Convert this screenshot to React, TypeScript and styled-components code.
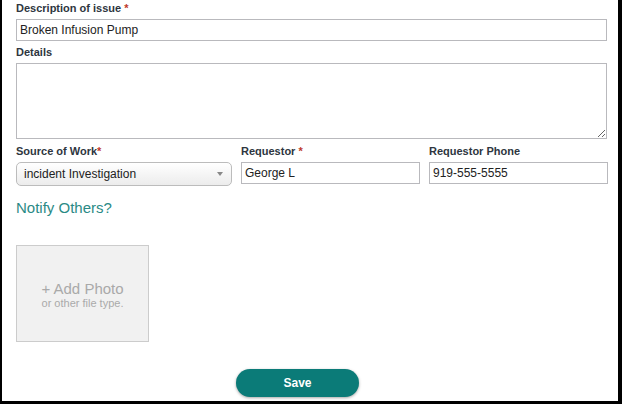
import React from 'react';
import styled, { createGlobalStyle } from 'styled-components';

const GlobalStyle = createGlobalStyle`
  html, body {
    margin: 0;
    padding: 0;
    background: #fff;
  }
  body {
    font-family: Arial, "Liberation Sans", sans-serif;
  }
`;

export default function App() {
  return (
    <>
      <GlobalStyle />
      <Frame>
        <Field>
          <Label>Description of issue <Req>*</Req></Label>
          <TextInput defaultValue="Broken Infusion Pump" />
        </Field>
        <Field>
          <Label>Details</Label>
          <TextArea />
        </Field>
        <Row>
          <Field>
            <Label>Source of Work<Req>*</Req></Label>
            <SelectBox>
              <span>incident Investigation</span>
              <Caret />
            </SelectBox>
          </Field>
          <Field>
            <Label>Requestor <Req>*</Req></Label>
            <TextInput defaultValue="George L" />
          </Field>
          <Field>
            <Label>Requestor Phone</Label>
            <TextInput defaultValue="919-555-5555" />
          </Field>
        </Row>
        <NotifyLink>Notify Others?</NotifyLink>
        <PhotoDrop>
          <PhotoTitle>+ Add Photo</PhotoTitle>
          <PhotoHint>or other file type.</PhotoHint>
        </PhotoDrop>
        <Footer>
          <SaveButton>Save</SaveButton>
        </Footer>
      </Frame>
    </>
  );
}

const Frame = styled.div`
  box-sizing: border-box;
  width: 622px;
  height: 404px;
  border-left: 2px solid #000;
  border-right: 4px solid #000;
  border-bottom: 3px solid #000;
  padding: 2px 11px 0 14px;
  display: flex;
  flex-direction: column;
`;

const Field = styled.div`
  display: flex;
  flex-direction: column;
  margin-bottom: 5px;
`;

const Label = styled.label`
  font-size: 11px;
  font-weight: bold;
  color: #2e3640;
  line-height: 13px;
  margin-bottom: 4px;
`;

const Req = styled.span`
  color: #c0392b;
`;

const TextInput = styled.input`
  box-sizing: border-box;
  height: 22px;
  border: 1px solid #b9b9bd;
  padding: 0 3px;
  font-family: Arial, "Liberation Sans", sans-serif;
  font-size: 12px;
  color: #222;
  outline: none;
`;

const TextArea = styled.textarea`
  box-sizing: border-box;
  height: 76px;
  border: 1px solid #b9b9bd;
  resize: vertical;
  outline: none;
  display: block;
`;

const Row = styled.div`
  display: grid;
  grid-template-columns: 216px 179px 179px;
  column-gap: 9px;
  margin-top: 1px;
`;

const SelectBox = styled.div`
  box-sizing: border-box;
  height: 24px;
  border: 1px solid #bcbcbc;
  border-radius: 5px;
  background: linear-gradient(#ffffff, #ececec);
  display: flex;
  align-items: center;
  justify-content: space-between;
  padding: 0 8px 0 7px;
  font-size: 12px;
  color: #222;
`;

const Caret = styled.span`
  width: 0;
  height: 0;
  border-left: 3px solid transparent;
  border-right: 3px solid transparent;
  border-top: 4px solid #888;
`;

const NotifyLink = styled.div`
  margin-top: 8px;
  font-size: 15px;
  color: #2a8a86;
`;

const PhotoDrop = styled.div`
  box-sizing: border-box;
  margin-top: 29px;
  width: 133px;
  height: 97px;
  background: #f1f1f1;
  border: 1px solid #cccccc;
  display: flex;
  flex-direction: column;
  align-items: center;
  justify-content: center;
  padding-top: 2px;
`;

const PhotoTitle = styled.div`
  font-size: 15px;
  color: #a9a9a9;
  line-height: 17px;
`;

const PhotoHint = styled.div`
  font-size: 11px;
  color: #aaaaaa;
  line-height: 13px;
`;

const Footer = styled.div`
  display: flex;
  justify-content: center;
  margin-top: 27px;
  padding-right: 28px;
`;

const SaveButton = styled.button`
  width: 123px;
  height: 28px;
  border: none;
  border-radius: 14px;
  background: #0b7b78;
  color: #fff;
  font-family: Arial, "Liberation Sans", sans-serif;
  font-size: 12px;
  font-weight: bold;
  box-shadow: 0 1px 3px rgba(0, 0, 0, 0.35);
`;
